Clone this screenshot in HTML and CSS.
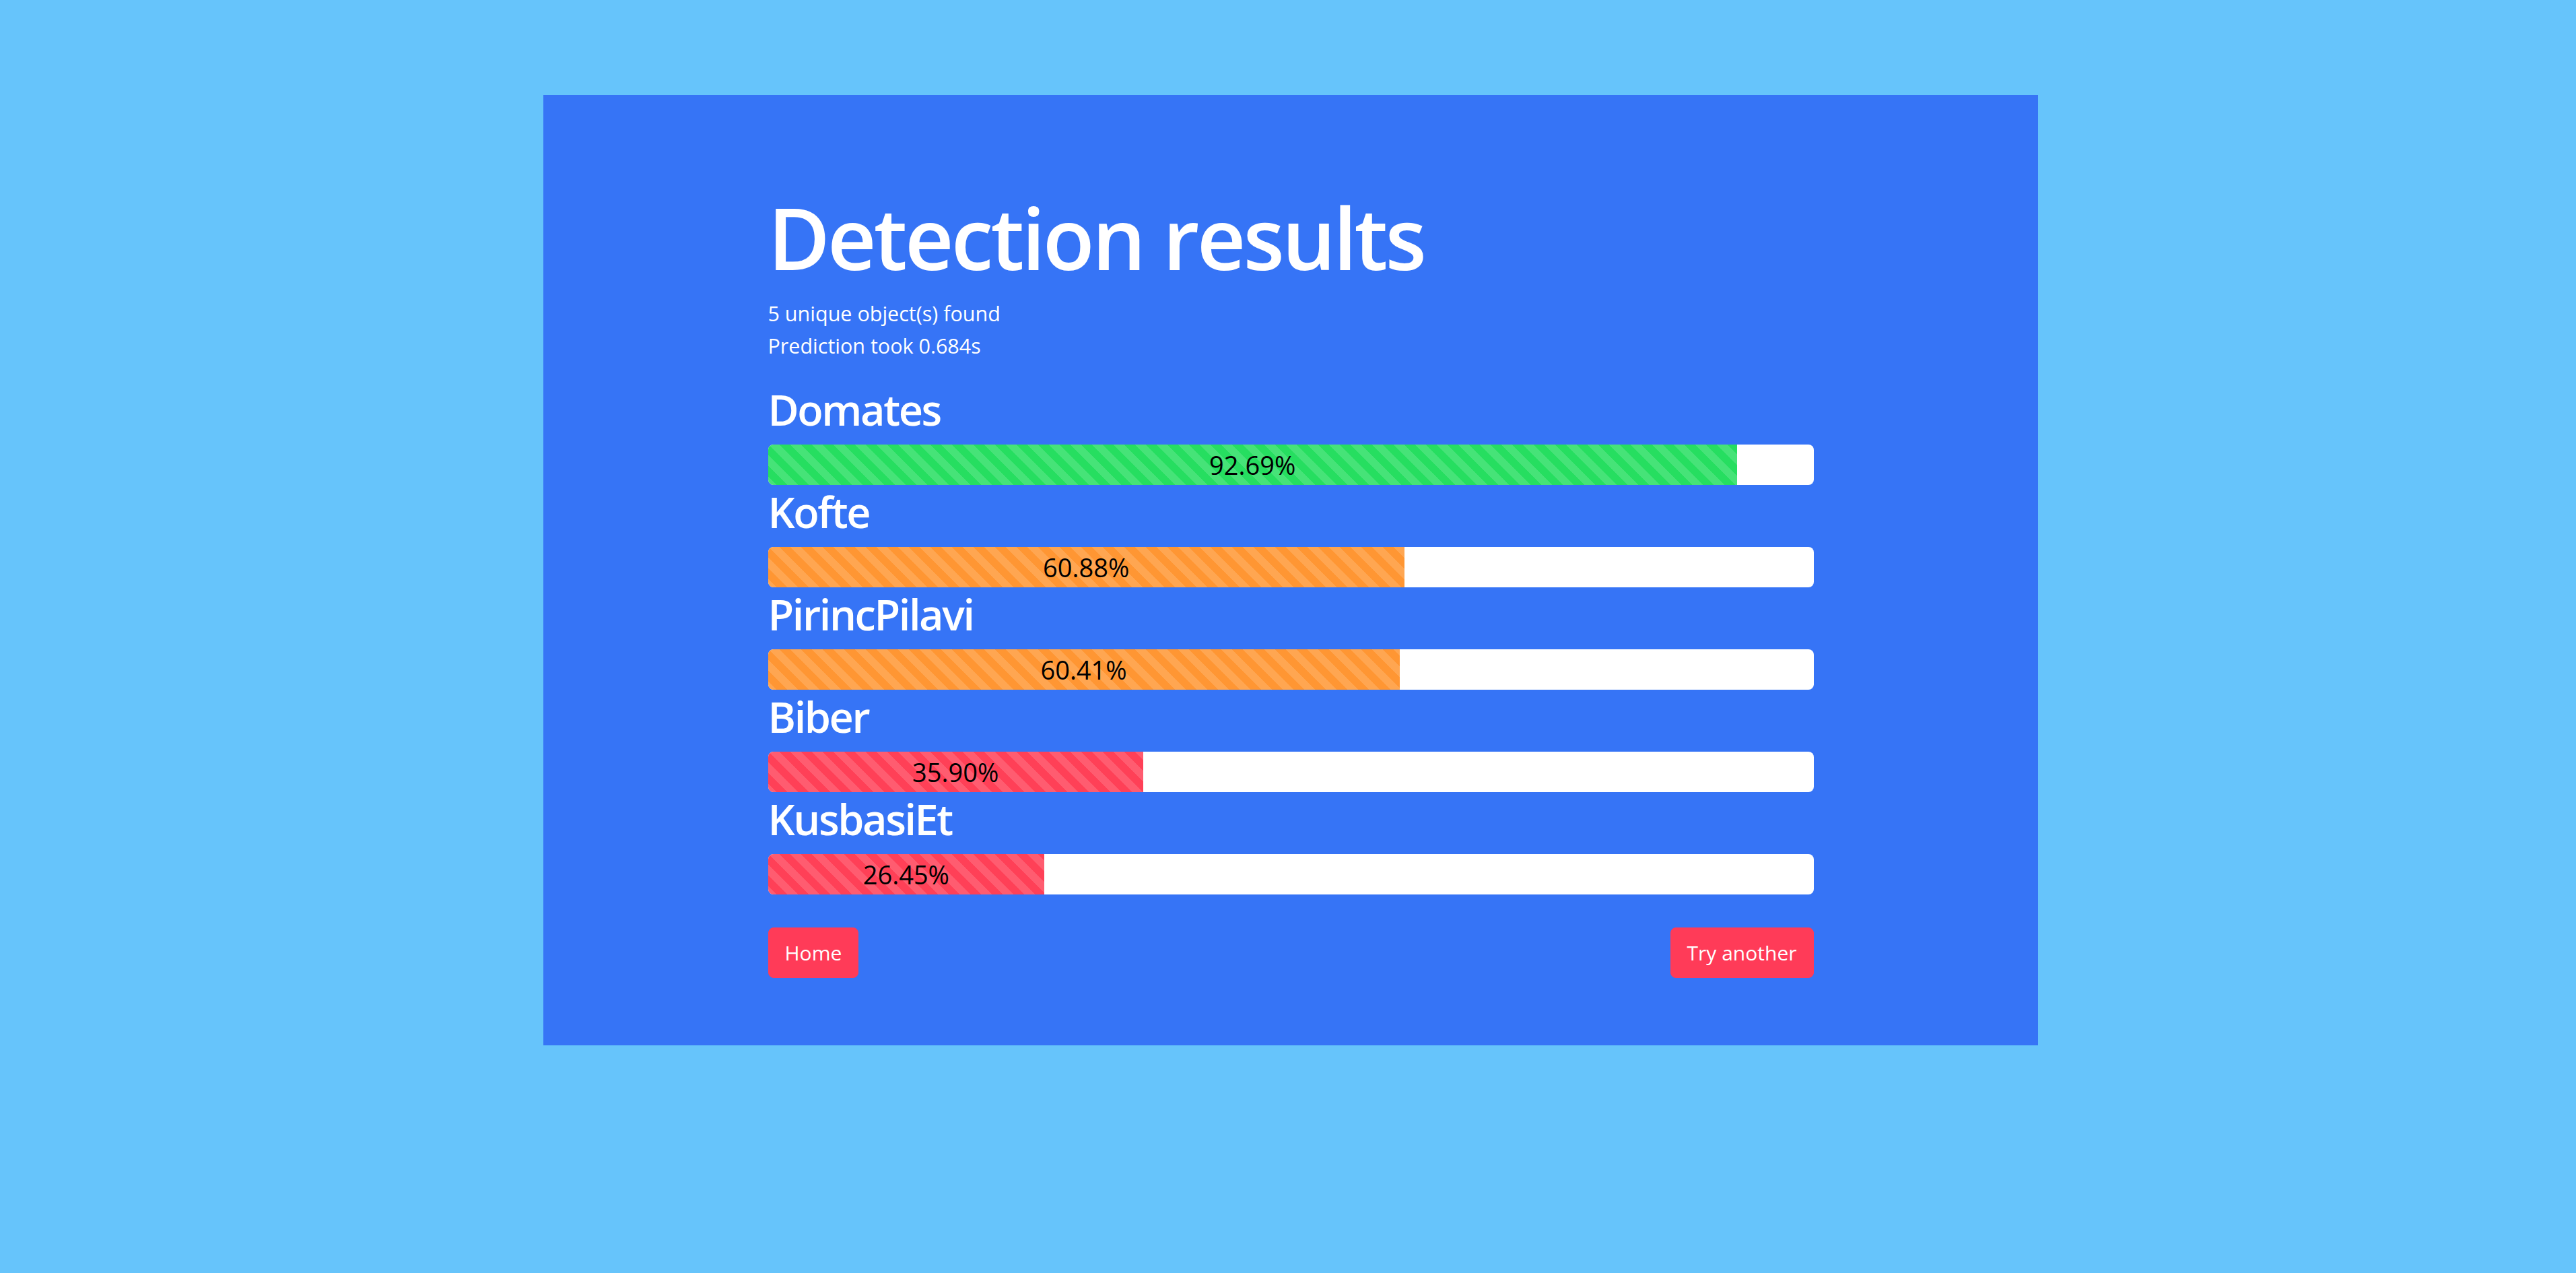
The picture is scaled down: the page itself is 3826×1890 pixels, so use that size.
FILE: index.html
```html
<!DOCTYPE html>
<html lang="en">
<head>
<meta charset="utf-8">
<title>Detection results</title>
<link rel="stylesheet" href="styles.css">
</head>
<body>
<div class="page">
  <main class="panel">
    <div class="content">
      <h1 class="title">Detection results</h1>
      <p class="meta">5 unique object(s) found</p>
      <p class="meta">Prediction took 0.684s</p>
      <div class="results">
        <div class="result">
          <h2 class="label">Domates</h2>
          <div class="track"><div class="fill fill-green" style="width:92.69%">92.69%</div></div>
        </div>
        <div class="result">
          <h2 class="label">Kofte</h2>
          <div class="track"><div class="fill fill-orange" style="width:60.88%">60.88%</div></div>
        </div>
        <div class="result">
          <h2 class="label">PirincPilavi</h2>
          <div class="track"><div class="fill fill-orange" style="width:60.41%">60.41%</div></div>
        </div>
        <div class="result">
          <h2 class="label">Biber</h2>
          <div class="track"><div class="fill fill-red" style="width:35.90%">35.90%</div></div>
        </div>
        <div class="result">
          <h2 class="label">KusbasiEt</h2>
          <div class="track"><div class="fill fill-red" style="width:26.45%">26.45%</div></div>
        </div>
      </div>
      <div class="actions">
        <a class="btn" href="#">Home</a>
        <a class="btn" href="#">Try another</a>
      </div>
    </div>
  </main>
</div>
</body>
</html>
```
FILE: styles.css
```css
html, body {
  margin: 0;
  padding: 0;
}
body {
  background: #66c4fb;
  font-family: "Open Sans", "Noto Sans", sans-serif;
  color: #fff;
  min-height: 1890px;
}
.page {
  padding-left: 8px;
  padding-top: 141px;
  display: flex;
  justify-content: center;
}
.panel {
  width: 2220px;
  background: #3674f6;
  padding: 136px 0 100px;
  display: flex;
  justify-content: center;
  box-sizing: border-box;
}
.content {
  width: 1553px;
  display: flex;
  flex-direction: column;
}
.title {
  margin: 0 0 14px;
  font-size: 126px;
  line-height: 150px;
  font-weight: 600;
  letter-spacing: -3.8px;
}
.meta {
  margin: 0;
  font-size: 30.5px;
  line-height: 48px;
  font-weight: 400;
}
.results {
  margin-top: 33px;
  display: flex;
  flex-direction: column;
}
.result {
  display: flex;
  flex-direction: column;
  margin-bottom: 2px;
}
.label {
  margin: 0 0 14px;
  font-size: 63px;
  line-height: 76px;
  font-weight: 600;
  letter-spacing: -2.4px;
}
.track {
  height: 60px;
  background: #fff;
  border-radius: 8px;
  overflow: hidden;
  display: flex;
}
.fill {
  height: 100%;
  display: flex;
  align-items: center;
  justify-content: center;
  color: #000;
  font-size: 38px;
  white-space: nowrap;
  background-image: linear-gradient(45deg, rgba(255,255,255,.15) 25%, transparent 25%, transparent 50%, rgba(255,255,255,.15) 50%, rgba(255,255,255,.15) 75%, transparent 75%, transparent);
  background-size: 32px 32px;
}
.fill-green { background-color: #26de60; }
.fill-orange { background-color: #ff9633; }
.fill-red { background-color: #ff4057; }
.actions {
  margin-top: 47px;
  display: flex;
  justify-content: space-between;
}
.btn {
  display: inline-block;
  box-sizing: border-box;
  height: 75px;
  padding: 0 24px;
  line-height: 73px;
  border: 1px solid #ff3b58;
  background: #ff3b58;
  color: #fff;
  font-size: 30px;
  border-radius: 8px;
  text-decoration: none;
}
```
